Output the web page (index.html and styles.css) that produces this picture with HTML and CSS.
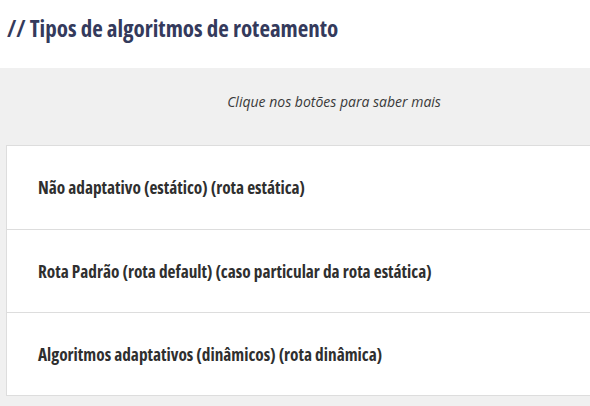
FILE: index.html
```html
<!DOCTYPE html>
<html lang="pt">
<head>
<meta charset="utf-8">
<link rel="stylesheet" href="styles.css">
</head>
<body>
<div class="page">
  <h1 class="title">// Tipos de algoritmos de roteamento</h1>
  <section class="panel">
    <p class="hint">Clique nos botões para saber mais</p>
    <div class="list">
      <div class="item">Não adaptativo (estático) (rota estática)</div>
      <div class="item">Rota Padrão (rota default) (caso particular da rota estática)</div>
      <div class="item">Algoritmos adaptativos (dinâmicos) (rota dinâmica)</div>
    </div>
  </section>
</div>
</body>
</html>
```
FILE: styles.css
```css
html, body {
  margin: 0;
  padding: 0;
  background: #ffffff;
  overflow: hidden;
}
.page {
  width: 668px;
  font-family: "Open Sans", "Liberation Sans", sans-serif;
}
.title {
  margin: 0;
  height: 68px;
  padding: 13px 0 0 7px;
  box-sizing: border-box;
  font-size: 23px;
  line-height: 30px;
  font-weight: 700;
  font-stretch: 75%;
  color: #343a5c;
}
.panel {
  background: #f0f0f0;
  padding: 24px 0 12px 6px;
  height: 338px;
  box-sizing: border-box;
}
.hint {
  margin: 0 0 0 -6px;
  text-align: center;
  font-size: 14px;
  line-height: 20px;
  font-style: italic;
  color: #3a3a3a;
  height: 53px;
}
.list {
  background: #ffffff;
  border: 1px solid #dddddd;
}
.item {
  height: 82px;
  display: flex;
  align-items: center;
  padding-left: 31px;
  font-size: 17.3px;
  font-weight: 700;
  font-stretch: 75%;
  color: #2f2f2f;
  border-top: 1px solid #dddddd;
}
.item:first-child {
  border-top: none;
  height: 83px;
}
```
